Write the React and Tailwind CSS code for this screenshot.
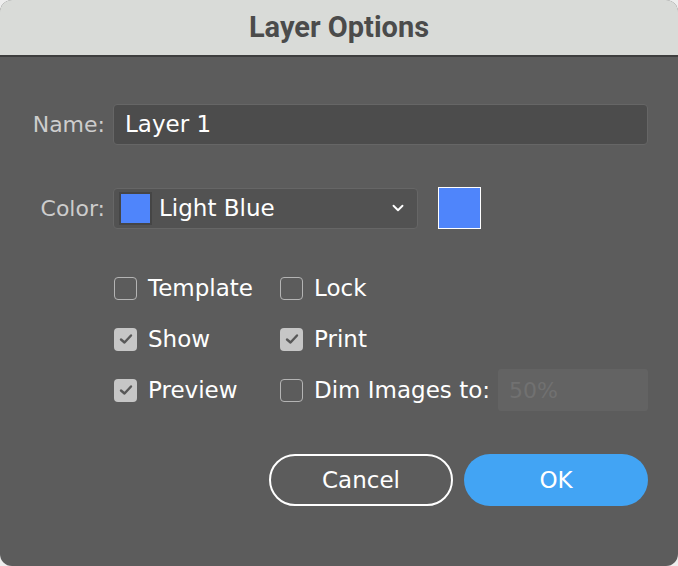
import { ChevronDown } from 'lucide-react'

const font = { fontFamily: '"DejaVu Sans", "Noto Sans", sans-serif' }

const Checkbox = ({ checked, label }) => (
  <label className="flex items-center gap-[11px] h-[24px]">
    {checked ? (
      <span className="w-[23px] h-[23px] rounded-[4px] bg-[#c6c6c6] flex items-center justify-center">
        <svg width="14" height="12" viewBox="0 0 14 12" fill="none">
          <path d="M2 6.5 L5.5 9.5 L12 2.5" stroke="#585858" strokeWidth="2.4" strokeLinecap="round" strokeLinejoin="round" />
        </svg>
      </span>
    ) : (
      <span className="w-[23px] h-[23px] rounded-[4px] border-[1.5px] border-[#b4b4b4]" />
    )}
    <span className="text-[23px] text-white leading-none">{label}</span>
  </label>
)

export default function App() {
  return (
    <div className="w-[678px] h-[566px] bg-[#eeeeee]" style={font}>
      <div className="w-full h-full rounded-[12px] overflow-hidden flex flex-col bg-[#5c5c5c]">
        <div className="h-[57px] shrink-0 bg-[#d9dbd8] border-b-[2px] border-[#3e3e3e] flex items-center justify-center">
          <span className="text-[29px] font-bold text-[#4b4b4b]" style={{ fontFamily: 'Roboto, sans-serif' }}>Layer Options</span>
        </div>

        <div className="flex-1 pt-[47px]">
          {/* Name */}
          <div className="flex items-center">
            <span className="w-[105px] text-right text-[22px] text-[#cdcdcd]">Name:</span>
            <div className="ml-[8px] w-[535px] h-[41px] rounded-[4px] bg-[#4c4c4c] border border-[#666] flex items-center px-[11px]">
              <span className="text-[23px] text-white">Layer 1</span>
            </div>
          </div>

          {/* Color */}
          <div className="flex items-center mt-[42px]">
            <span className="w-[105px] text-right text-[22px] text-[#cdcdcd]">Color:</span>
            <div className="ml-[8px] w-[305px] h-[41px] rounded-[4px] bg-[#525252] border border-[#666] flex items-center pl-[5px] pr-[10px]">
              <span className="w-[33px] h-[33px] bg-[#4f85fb] border-[2px] border-[#454545]" />
              <span className="ml-[7px] text-[23px] text-white flex-1">Light Blue</span>
              <ChevronDown size={18} strokeWidth={2.5} className="text-white" />
            </div>
            <span className="ml-[20px] w-[43px] h-[42px] bg-[#4f85fb] border border-white" />
          </div>

          {/* Options */}
          <div className="ml-[114px] mt-[47px] grid grid-cols-[166px_368px] auto-rows-[24px] gap-y-[27px]">
            <Checkbox label="Template" />
            <Checkbox label="Lock" />
            <Checkbox checked label="Show" />
            <Checkbox checked label="Print" />
            <Checkbox checked label="Preview" />
            <div className="flex items-center">
              <Checkbox label="Dim Images to:" />
              <div className="ml-auto -my-[9px] w-[150px] h-[42px] rounded-[3px] bg-[#636363] flex items-center px-[11px]">
                <span className="text-[22px] text-[#717171]">50%</span>
              </div>
            </div>
          </div>

          {/* Buttons */}
          <div className="flex justify-end gap-[11px] pr-[30px] mt-[52px]">
            <button className="w-[184px] h-[52px] rounded-full border-[2px] border-white text-white text-[23px]">Cancel</button>
            <button className="w-[184px] h-[52px] rounded-full bg-[#42a4f4] text-white text-[23px]">OK</button>
          </div>
        </div>
      </div>
    </div>
  )
}
